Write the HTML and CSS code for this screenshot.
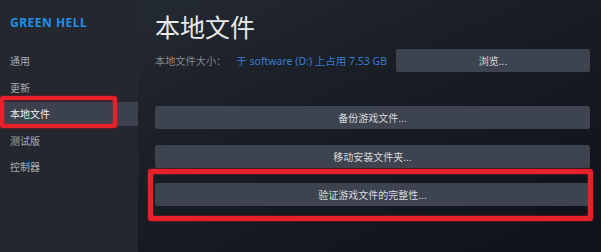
FILE: index.html
```html
<!DOCTYPE html>
<html lang="zh-CN">
<head>
<meta charset="utf-8">
<title>本地文件</title>
<link rel="stylesheet" href="styles.css">
</head>
<body>
<div class="app">
  <aside class="sidebar">
    <div class="game-title">GREEN HELL</div>
    <nav class="nav">
      <div class="nav-item">通用</div>
      <div class="nav-item">更新</div>
      <div class="nav-item selected">本地文件<span class="mark mark-nav"></span></div>
      <div class="nav-item">测试版</div>
      <div class="nav-item">控制器</div>
    </nav>
  </aside>
  <main class="main">
    <h1 class="title">本地文件</h1>
    <div class="info-row">
      <span class="label">本地文件大小：</span>
      <span class="value">于 software (D:) 上占用 7.53 GB</span>
      <button class="btn btn-browse">浏览...</button>
    </div>
    <div class="actions">
      <button class="btn">备份游戏文件...</button>
      <button class="btn">移动安装文件夹...</button>
      <div class="marked"><button class="btn">验证游戏文件的完整性...</button><span class="mark mark-verify"></span></div>
    </div>
  </main>
</div>
</body>
</html>
```
FILE: styles.css
```css
html, body {
  margin: 0;
  padding: 0;
  width: 601px;
  height: 252px;
  overflow: hidden;
  background: #0f1318;
  font-family: "Noto Sans", "Noto Sans CJK SC", sans-serif;
}

.app {
  display: flex;
  width: 601px;
  height: 252px;
}

.sidebar {
  width: 138px;
  flex: none;
  background: #24272d;
  display: flex;
  flex-direction: column;
}

.game-title {
  margin: 16px 0 0 10px;
  height: 14px;
  line-height: 14px;
  font-family: "Noto Sans", sans-serif;
  font-weight: 700;
  font-size: 12px;
  color: #1f8fe8;
  letter-spacing: 0.5px;
}

.nav {
  margin-top: 19px;
  display: flex;
  flex-direction: column;
  gap: 2.5px;
}

.nav-item {
  position: relative;
  height: 24px;
  line-height: 24px;
  padding-left: 10px;
  font-family: "Noto Sans CJK SC", sans-serif;
  font-size: 10px;
  color: #a9adb2;
}

.nav-item.selected {
  background: #3c424d;
  color: #f0f0f0;
}

.mark {
  position: absolute;
  box-sizing: border-box;
  border: 4px solid #e8202b;
  border-radius: 3px;
  box-shadow: 0 0 2px rgba(232, 32, 43, 0.8), inset 0 0 2px rgba(232, 32, 43, 0.8);
  pointer-events: none;
}

.mark-nav {
  left: 0;
  top: -6px;
  width: 117px;
  height: 32px;
}

.main {
  flex: 1;
  padding: 12px 11px 0 17px;
  background: linear-gradient(155deg, #242a33 0%, #181c23 45%, #0f1218 100%);
  display: flex;
  flex-direction: column;
}

.title {
  margin: 0;
  height: 28px;
  line-height: 28px;
  font-family: "Noto Sans CJK SC", sans-serif;
  font-weight: 400;
  font-size: 25px;
  color: #eaeaea;
}

.info-row {
  margin-top: 9px;
  display: flex;
  align-items: center;
  height: 23px;
  font-family: "Noto Sans", "Noto Sans CJK SC", sans-serif;
}

.label {
  font-size: 10.2px;
  color: #838a93;
}

.value {
  margin-left: 10px;
  font-size: 10.5px;
  color: #3a7ad2;
}

.btn {
  display: block;
  box-sizing: border-box;
  width: 100%;
  height: 23px;
  margin: 0;
  padding: 0;
  border: none;
  border-radius: 2px;
  background: #3d434f;
  color: #d8dadc;
  font-family: "Noto Sans CJK SC", sans-serif;
  font-size: 10px;
  text-align: center;
}

.btn-browse {
  width: 194px;
  margin-left: auto;
}

.actions {
  margin-top: 34px;
  display: flex;
  flex-direction: column;
  gap: 15.5px;
}

.marked {
  position: relative;
}

.mark-verify {
  left: -7px;
  top: -14px;
  right: -3px;
  bottom: -15px;
  border-width: 5px;
}
```
